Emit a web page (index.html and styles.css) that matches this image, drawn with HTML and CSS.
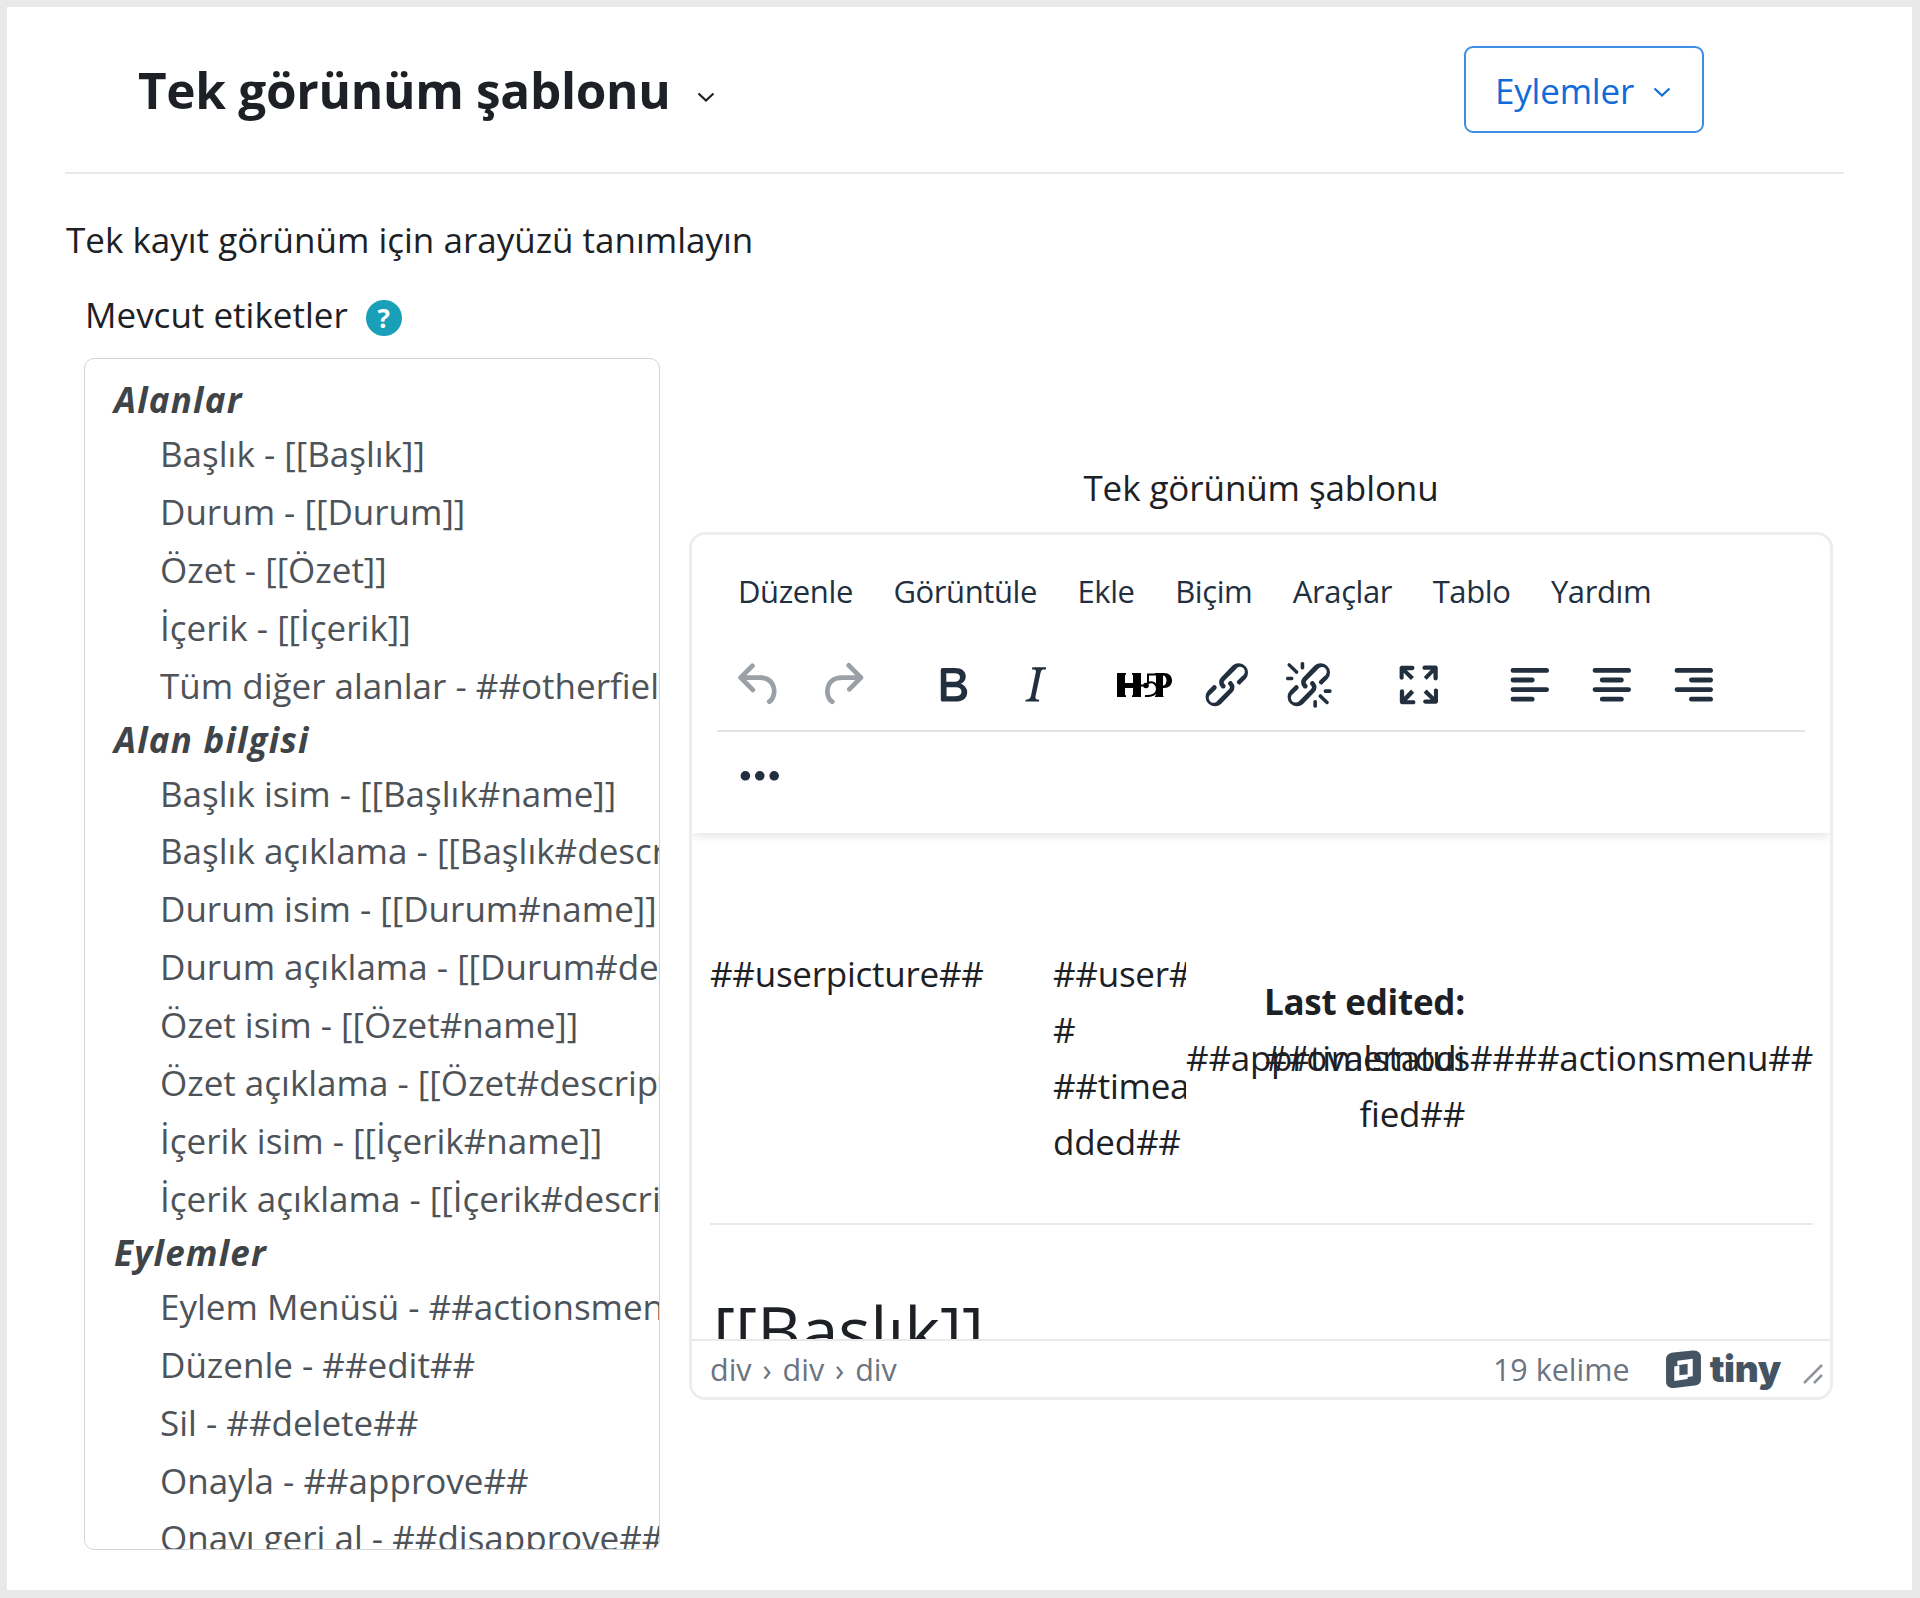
FILE: index.html
```html
<!DOCTYPE html>
<html lang="tr">
<head>
<meta charset="utf-8">
<title>Tek görünüm şablonu</title>
<link rel="stylesheet" href="styles.css">
</head>
<body>
<main class="panel">
  <header class="page-head">
    <h1 class="title">Tek görünüm şablonu
      <svg class="chev chev-title" viewBox="0 0 18 10"><path d="M1.5 1.5 9 8.5l7.500-7"/></svg>
    </h1>
    <button class="actions-btn">Eylemler
      <svg class="chev chev-btn" viewBox="0 0 18 10"><path d="M1.500 1.500 9 8.500l7.500-7"/></svg>
    </button>
  </header>
  <p class="desc">Tek kayıt görünüm için arayüzü tanımlayın</p>
  <div class="tags-label">Mevcut etiketler <span class="help">?</span></div>
  <div class="columns">
    <div class="taglist">
      <div class="tag-head">Alanlar</div>
      <div class="tag">Başlık - [[Başlık]]</div>
      <div class="tag">Durum - [[Durum]]</div>
      <div class="tag">Özet - [[Özet]]</div>
      <div class="tag">İçerik - [[İçerik]]</div>
      <div class="tag">Tüm diğer alanlar - ##otherfields##</div>
      <div class="tag-head">Alan bilgisi</div>
      <div class="tag">Başlık isim - [[Başlık#name]]</div>
      <div class="tag">Başlık açıklama - [[Başlık#description]]</div>
      <div class="tag">Durum isim - [[Durum#name]]</div>
      <div class="tag">Durum açıklama - [[Durum#description]]</div>
      <div class="tag">Özet isim - [[Özet#name]]</div>
      <div class="tag">Özet açıklama - [[Özet#description]]</div>
      <div class="tag">İçerik isim - [[İçerik#name]]</div>
      <div class="tag">İçerik açıklama - [[İçerik#description]]</div>
      <div class="tag-head">Eylemler</div>
      <div class="tag">Eylem Menüsü - ##actionsmenu##</div>
      <div class="tag">Düzenle - ##edit##</div>
      <div class="tag">Sil - ##delete##</div>
      <div class="tag">Onayla - ##approve##</div>
      <div class="tag">Onayı geri al - ##disapprove##</div>
    </div>
    <section class="editor-col">
      <div class="editor-label">Tek görünüm şablonu</div>
      <div class="editor">
        <div class="editor-top">
          <nav class="menubar">
            <span>Düzenle</span><span>Görüntüle</span><span>Ekle</span><span>Biçim</span><span>Araçlar</span><span>Tablo</span><span>Yardım</span>
          </nav>
          <div class="toolbar toolbar-main">
            <div class="group">
              <span class="tb muted"><svg viewBox="0 0 24 24"><path d="M6.4 8H12c3.700 0 6.200 2 6.800 5.100.6 2.700-.4 5.600-2.300 6.800a1 1 0 0 1-1-1.800c1.100-.6 1.800-2.700 1.400-4.600-.5-2.100-2.100-3.500-4.900-3.500H6.400l3.300 3.300a1 1 0 1 1-1.400 1.400l-5-5a1 1 0 0 1 0-1.400l5-5a1 1 0 0 1 1.400 1.400L6.400 8z"/></svg></span>
              <span class="tb muted"><svg viewBox="0 0 24 24"><path d="M17.600 10H12c-2.800 0-4.400 1.400-4.900 3.500-.4 2 .3 4 1.400 4.600a1 1 0 1 1-1 1.800c-2-1.200-2.900-4.100-2.300-6.800.6-3 3-5.100 6.800-5.100h5.600l-3.300-3.300a1 1 0 1 1 1.400-1.400l5 5a1 1 0 0 1 0 1.400l-5 5a1 1 0 0 1-1.400-1.400l3.300-3.300z"/></svg></span>
            </div>
            <div class="group">
              <span class="tb"><svg viewBox="0 0 24 24"><path fill-rule="evenodd" d="M7.800 19c-.3 0-.5 0-.6-.2l-.2-.5V5.700c0-.2 0-.4.2-.5l.6-.2h5c1.500 0 2.700.3 3.500 1 .7.6 1.100 1.400 1.100 2.500a3 3 0 0 1-.6 1.900c-.4.6-1 1-1.600 1.200.4.100.9.300 1.300.6s.8.7 1 1.200c.4.4.5 1 .5 1.600 0 1.300-.4 2.300-1.300 3-.8.7-2.100 1-3.800 1H7.800zm5-8.300c.6 0 1.200-.1 1.600-.5.4-.3.6-.7.6-1.300 0-1.100-.8-1.700-2.300-1.700H9.300v3.500h3.400zm.5 6c.7 0 1.300-.1 1.700-.4.4-.4.6-.9.6-1.500s-.2-1-.7-1.400c-.4-.3-1-.4-2-.4H9.400v3.800h4z"/></svg></span>
              <span class="tb"><svg viewBox="0 0 24 24"><path fill-rule="evenodd" d="M16.700 4.700l-.1.9h-.3c-.6 0-1 0-1.400.3-.3.3-.4.6-.5 1.100l-2.100 9.800v.6c0 .5.4.8 1.400.8h.2l-.2.8H8l.2-.8h.2c1.100 0 1.800-.5 2-1.500l2-9.800.1-.5c0-.6-.4-.8-1.400-.8h-.3l.2-.9h5.800z"/></svg></span>
            </div>
            <div class="group">
              <span class="tb"><svg class="h5p" viewBox="0 0 55 24">
                <path d="M0 0h9v1.500L8 2v8h8V2l-1-.5V0h9v24h-9v-1.500l1-.5v-7H8v7l1 .5V24H0z"/>
                <path class="h5p-thin" d="M24 12.500h6M30 1.500h10M31 2v8c5-2 9 1 9 6s-5 7.500-12 7"/>
                <circle cx="29" cy="12.500" r="2.800"/>
                <path fill-rule="evenodd" d="M38 0h9c5 0 8 3 8 7.500S52 15 47 15h-1v8l1 1h-9v-1l1-1V2l-1-1zm8 2.500v10c2 0 3.500-2 3.500-5s-1.500-5-3.500-5z"/>
              </svg></span>
              <span class="tb"><svg viewBox="0 0 24 24"><path d="M6.200 12.300a1 1 0 0 1 1.400 1.400l-2 2a2 2 0 1 0 2.600 2.800l4.800-4.800a1 1 0 0 0 0-1.400 1 1 0 1 1 1.400-1.300 2.900 2.900 0 0 1 0 4L9.600 20a3.900 3.900 0 0 1-5.500-5.500l2-2zm11.600-.6a1 1 0 0 1-1.400-1.400l2-2a2 2 0 1 0-2.600-2.800L11 10.300a1 1 0 0 0 0 1.400A1 1 0 1 1 9.600 13a2.900 2.900 0 0 1 0-4L14.400 4a3.900 3.900 0 0 1 5.500 5.500l-2 2z"/></svg></span>
              <span class="tb"><svg viewBox="0 0 24 24"><path d="M6.200 12.300a1 1 0 0 1 1.400 1.400l-2.100 2a2 2 0 1 0 2.700 2.800l4.800-4.800a1 1 0 0 0 0-1.400 1 1 0 1 1 1.400-1.300 2.900 2.900 0 0 1 0 4L9.600 20a3.900 3.900 0 0 1-5.500-5.500l2-2zm11.600-.6a1 1 0 0 1-1.400-1.400l2.100-2a2 2 0 1 0-2.700-2.800L11 10.300a1 1 0 0 0 0 1.400A1 1 0 1 1 9.600 13a2.900 2.900 0 0 1 0-4L14.400 4a3.900 3.900 0 0 1 5.500 5.500l-2 2zM7.600 6.300a.8.800 0 0 1-1 1.100L3.300 4.200a.7.700 0 1 1 1-1l3.200 3.100zM5.100 8.600a.8.800 0 0 1 0 1.500H3a.8.800 0 0 1 0-1.500H5zm5-3.500a.8.800 0 0 1-1.500 0V3a.8.800 0 0 1 1.500 0v2zm6 11.800a.8.800 0 0 1 1-1l3.200 3.200a.8.800 0 0 1-1 1L16 17zm-2.200 2a.8.800 0 0 1 1.500 0V21a.8.800 0 0 1-1.500 0V19zm5-3.500a.7.700 0 1 1 0-1.500H21a.8.800 0 0 1 0 1.500h-2.100z"/></svg></span>
            </div>
            <div class="group">
              <span class="tb"><svg viewBox="0 0 24 24"><path d="M15.300 10l-1.200-1.300 2.900-3h-2.300a.9.900 0 1 1 0-1.700H19c.5 0 .9.4.9.9v4.400a.9.900 0 1 1-1.800 0V7l-2.900 3zm0 4l3 3v-2.300a.9.900 0 1 1 1.700 0V19c0 .5-.4.9-.9.9h-4.400a.9.900 0 1 1 0-1.800H17l-3-2.900 1.300-1.200zM10 15.400l-2.900 3h2.300a.9.900 0 1 1 0 1.700H5a.9.900 0 0 1-.9-.9v-4.400a.9.900 0 1 1 1.800 0V17l2.900-3 1.200 1.300zM8.700 10L5.700 7v2.300a.9.900 0 0 1-1.700 0V5c0-.5.4-.9.9-.9h4.400a.9.900 0 0 1 0 1.800H7l3 2.900-1.300 1.200z"/></svg></span>
            </div>
            <div class="group">
              <span class="tb"><svg viewBox="0 0 24 24"><path fill-rule="evenodd" d="M5 5h14c.6 0 1 .4 1 1s-.4 1-1 1H5a1 1 0 1 1 0-2zm0 4h8c.6 0 1 .4 1 1s-.4 1-1 1H5a1 1 0 1 1 0-2zm0 8h8c.6 0 1 .4 1 1s-.4 1-1 1H5a1 1 0 0 1 0-2zm0-4h14c.6 0 1 .4 1 1s-.4 1-1 1H5a1 1 0 0 1 0-2z"/></svg></span>
              <span class="tb"><svg viewBox="0 0 24 24"><path fill-rule="evenodd" d="M5 5h14c.6 0 1 .4 1 1s-.4 1-1 1H5a1 1 0 1 1 0-2zm3 4h8c.6 0 1 .4 1 1s-.4 1-1 1H8a1 1 0 1 1 0-2zm0 8h8c.6 0 1 .4 1 1s-.4 1-1 1H8a1 1 0 0 1 0-2zm-3-4h14c.6 0 1 .4 1 1s-.4 1-1 1H5a1 1 0 0 1 0-2z"/></svg></span>
              <span class="tb"><svg viewBox="0 0 24 24"><path fill-rule="evenodd" d="M5 5h14c.6 0 1 .4 1 1s-.4 1-1 1H5a1 1 0 1 1 0-2zm6 4h8c.6 0 1 .4 1 1s-.4 1-1 1h-8a1 1 0 0 1 0-2zm0 8h8c.6 0 1 .4 1 1s-.4 1-1 1h-8a1 1 0 0 1 0-2zm-6-4h14c.6 0 1 .4 1 1s-.4 1-1 1H5a1 1 0 0 1 0-2z"/></svg></span>
            </div>
          </div>
          <div class="toolbar toolbar-more">
            <span class="tb"><svg viewBox="0 0 24 24"><path d="M6 10a2 2 0 0 0-2 2c0 1.100.9 2 2 2a2 2 0 0 0 2-2 2 2 0 0 0-2-2zm12 0a2 2 0 0 0-2 2c0 1.100.9 2 2 2a2 2 0 0 0 2-2 2 2 0 0 0-2-2zm-6 0a2 2 0 0 0-2 2c0 1.100.9 2 2 2a2 2 0 0 0 2-2 2 2 0 0 0-2-2z"/></svg></span>
          </div>
        </div>
        <div class="sink">
          <div class="tpl-row">
            <div class="tpl-pic">##userpicture##</div>
            <div class="tpl-user">##user#<br>#<br>##timea<br>dded##</div>
            <div class="tpl-edited"><strong>Last edited:</strong><br>##timemodi<br>fied##</div>
            <div class="tpl-actions">##approvalstatus####actionsmenu##</div>
          </div>
          <hr class="tpl-rule">
          <h3 class="tpl-title">[[Başlık]]</h3>
        </div>
        <footer class="statusbar">
          <span class="path">div › div › div</span>
          <span class="words">19 kelime</span>
          <span class="brand">
            <svg class="brand-mark" viewBox="0 0 34 37"><path class="mark-bg" d="M7 2.500 26 .5C31 0 34 3 34 7v21c0 4-2 6-6 6.500L8 37c-5 .5-8-2-8-6V9c0-4 3-6 7-6.500z"/><path class="mark-white" d="M11 10.500 26 8.500v17l-5 .8V13.500l-10 1.300zM8 16l5-.8v9.500l8-1v4.500l-13 2z"/></svg>
            <span class="brand-name">tiny</span>
          </span>
          <svg class="resizer" viewBox="0 0 20 20"><path d="M1 19 19 1M11 19l8-8"/></svg>
        </footer>
      </div>
    </section>
  </div>
</main>
</body>
</html>
```
FILE: styles.css
```css
* { box-sizing: border-box; }
html, body { margin: 0; height: 1598px; overflow: hidden; }
body {
  background: #e9e9e9;
  padding: 7px 8px 8px 7px;
  font-family: "Open Sans", "Noto Sans", sans-serif;
  font-size: 35px;
  color: #1d2125;
}
.panel { background: #fff; height: 1583px; padding: 0 68px 0 58px; overflow: hidden; }

.page-head {
  display: flex; justify-content: space-between; align-items: center;
  height: 167px; padding: 39px 140px 39px 73px;
  border-bottom: 2px solid #e9e9e9;
}
.title { margin: 0; font-size: 49.500px; font-weight: 700; letter-spacing: -0.3px; display: flex; align-items: center; }
.chev { width: 18px; height: 10px; fill: none; stroke: currentColor; stroke-width: 2.200; }
.chev-title { margin-left: 26px; margin-top: 14px; }
.chev-btn { margin-top: 2px; }
.actions-btn {
  width: 240px; height: 87px; padding: 2px 31px 0 29px;
  display: flex; align-items: center; justify-content: space-between;
  background: #fff; border: 2px solid #3d8fe3; border-radius: 9px;
  color: #0f6cd8; font: inherit; letter-spacing: -0.2px;
}

.desc { margin: 39px 0 0 1px; line-height: 54px; }
.tags-label { margin: 21px 0 0 20px; line-height: 54px; display: flex; align-items: center; gap: 18px; }
.help {
  width: 36px; height: 36px; border-radius: 50%; background: #1a9fb8; color: #fff;
  font-size: 26px; font-weight: 700; line-height: 36px; text-align: center;
  margin-top: 5px;
}

.columns { display: flex; margin: 16px 0 0 19px; gap: 29px; }
.taglist {
  width: 576px; height: 1192px; overflow: hidden; flex: none;
  border: 1.500px solid #d4d4d4; border-radius: 10px;
  padding: 16px 0 0 29px; color: #4d5358;
}
.tag-head { font-weight: 700; font-style: italic; line-height: 50px; color: #3f4448; letter-spacing: 1.200px; }
.tag { padding-left: 46px; line-height: 57.900px; white-space: nowrap; }

.editor-col { width: 1144px; flex: none; padding-top: 101px; }
.editor-label { text-align: center; line-height: 57px; margin-bottom: 16px; letter-spacing: -0.1px; }
.editor {
  height: 868px; border: 3px solid #ededed; border-radius: 16px;
  display: flex; flex-direction: column; overflow: hidden;
}
.editor-top { position: relative; height: 298px; padding: 0 25px; box-shadow: 0 3px 9px rgba(34,47,62,.13); background: #fff; flex: none; }
.menubar { height: 105px; padding: 6px 21px 0; display: flex; align-items: center; gap: 40.500px; font-size: 31px; letter-spacing: -0.4px; color: #222f3e; }
.toolbar { display: flex; align-items: center; }
.toolbar-main { height: 92px; border-bottom: 2px solid #e3e3e3; gap: 28.400px; padding-left: 2px; }
.toolbar-more { height: 88px; padding-left: 2px; }
.group { display: flex; }
.tb { width: 82px; height: 58px; display: flex; align-items: center; justify-content: center; flex: none; }
.tb svg { width: 57.600px; height: 57.600px; fill: #222f3e; }
.tb.muted svg { fill: #9aa0a6; }
.tb svg.h5p { width: 55px; height: 24px; fill: #000; }
.h5p-thin { fill: none; stroke: #000; stroke-width: 2; }

.sink { flex: 1; min-height: 0; overflow: hidden; padding: 113px 17px 0 18px; letter-spacing: -0.25px; }
.tpl-row { display: grid; grid-template-columns: 343px 133px 1fr; align-items: center; line-height: 56px; }
.tpl-pic { grid-column: 1; align-self: start; }
.tpl-user { grid-column: 2; align-self: start; white-space: nowrap; overflow: hidden; }
.tpl-edited { grid-column: 3; grid-row: 1; width: 279px; text-align: right; }
.tpl-edited strong { font-weight: 700; }
.tpl-actions { grid-column: 3; grid-row: 1; white-space: nowrap; justify-self: end; }
.tpl-rule { margin: 53px 0 0; border: 0; border-top: 2px solid #e9e9e9; }
.tpl-title { margin: 70px 0 0 3px; font-size: 68px; font-weight: 400; line-height: 70px; }

.statusbar {
  height: 58px; flex: none; border-top: 2px solid #e9e9e9; padding: 0 7px 0 18px;
  display: flex; align-items: center; color: #6b7480; font-size: 30.500px;
}
.path { margin-right: auto; word-spacing: 3px; }
.brand { display: flex; align-items: center; margin-left: 36px; gap: 9px; }
.brand-mark { width: 35px; height: 38px; }
.mark-bg { fill: #455463; }
.mark-white { fill: #fff; }
.brand-name { font-family: "Inter", sans-serif; font-weight: 900; font-size: 37px; letter-spacing: -0.3px; color: #455463; line-height: 1; margin-top: -2px; }
.resizer { width: 20px; height: 20px; margin: 10px 0 0 22px; fill: none; stroke: #8f959b; stroke-width: 2.500; }
```
